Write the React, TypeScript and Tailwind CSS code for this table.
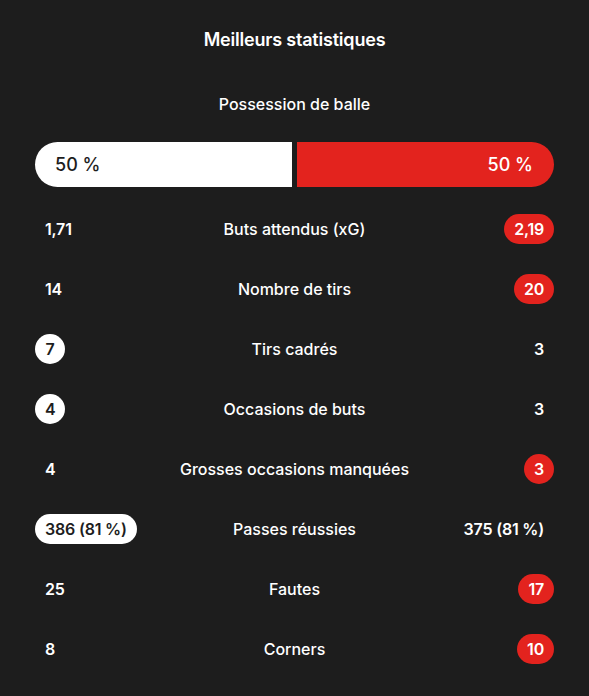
import React from "react";

type Stat = {
  label: string;
  home: string;
  away: string;
  winner?: "home" | "away";
};

const stats: Stat[] = [
  { label: "Buts attendus (xG)", home: "1,71", away: "2,19", winner: "away" },
  { label: "Nombre de tirs", home: "14", away: "20", winner: "away" },
  { label: "Tirs cadrés", home: "7", away: "3", winner: "home" },
  { label: "Occasions de buts", home: "4", away: "3", winner: "home" },
  { label: "Grosses occasions manquées", home: "4", away: "3", winner: "away" },
  { label: "Passes réussies", home: "386 (81 %)", away: "375 (81 %)", winner: "home" },
  { label: "Fautes", home: "25", away: "17", winner: "away" },
  { label: "Corners", home: "8", away: "10", winner: "away" },
];

function Value({ text, active, side }: { text: string; active: boolean; side: "home" | "away" }) {
  let color = "text-white";
  if (active && side === "home") color = "bg-white text-[#1d1d1d]";
  if (active && side === "away") color = "bg-[#e3231e] text-white";
  return (
    <span
      className={
        "h-[30px] min-w-[30px] px-[10px] rounded-full flex items-center justify-center text-[16px] font-semibold tracking-[-0.2px] " +
        color
      }
    >
      {text}
    </span>
  );
}

export default function App() {
  return (
    <div
      className="bg-[#1d1d1d] min-h-screen w-full px-[35px] pt-[28px] text-white"
      style={{ fontFamily: "Inter, 'Noto Sans', sans-serif" }}
    >
      <h2 className="text-center text-[18px] leading-6 font-semibold tracking-[-0.2px]">Meilleurs statistiques</h2>

      <p className="mt-[40px] text-center text-[16px] leading-6 font-medium">Possession de balle</p>

      <div className="mt-[26px] flex h-[45px] gap-[5px]">
        <div className="flex-1 bg-white rounded-l-full flex items-center pl-[20px] text-[#1d1d1d] text-[18px] font-medium">
          50 %
        </div>
        <div className="flex-1 bg-[#e3231e] rounded-r-full flex items-center justify-end pr-[21px] text-[18px] font-medium">
          50 %
        </div>
      </div>

      <div className="mt-[12px]">
        {stats.map((s) => (
          <div key={s.label} className="h-[60px] grid grid-cols-[1fr_auto_1fr] items-center">
            <div className="flex justify-start">
              <Value text={s.home} active={s.winner === "home"} side="home" />
            </div>
            <div className="text-center text-[16px] font-medium">{s.label}</div>
            <div className="flex justify-end">
              <Value text={s.away} active={s.winner === "away"} side="away" />
            </div>
          </div>
        ))}
      </div>
    </div>
  );
}
